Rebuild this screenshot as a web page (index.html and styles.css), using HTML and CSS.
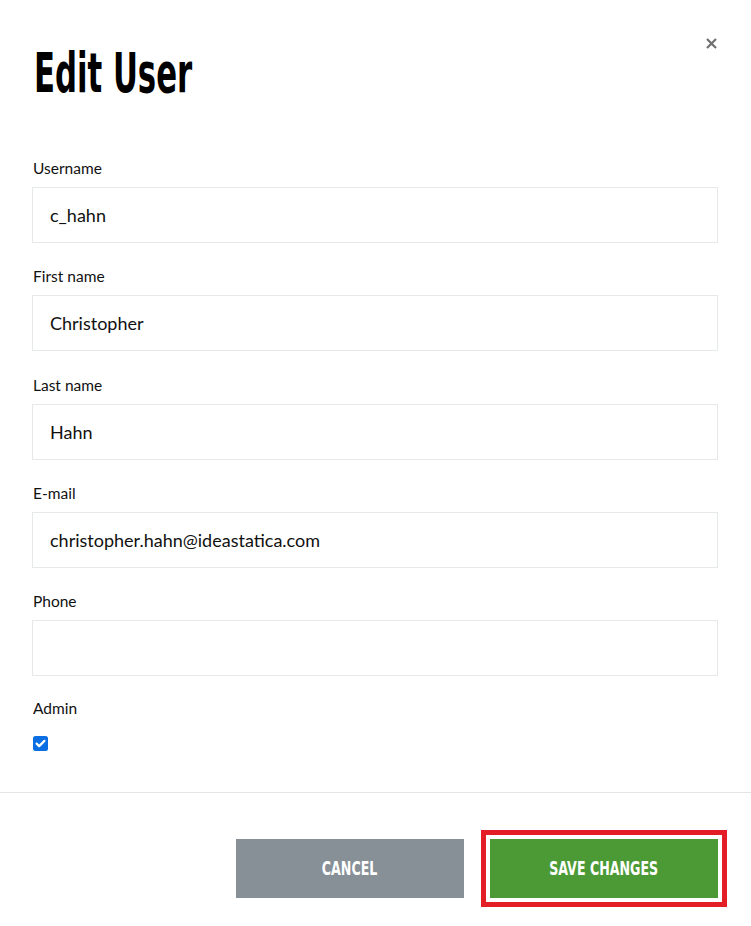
FILE: index.html
```html
<!DOCTYPE html>
<html lang="en">
<head>
<meta charset="utf-8">
<title>Edit User</title>
<link rel="stylesheet" href="styles.css">
</head>
<body>
<div class="modal">
  <div class="modal-body">
    <button class="close" aria-label="Close">
      <svg width="11" height="11" viewBox="0 0 11 11"><path d="M1 1L10 10M10 1L1 10" stroke="#707070" stroke-width="2.2" stroke-linecap="butt"/></svg>
    </button>
    <h1 class="title"><span>Edit User</span></h1>
    <form class="form">
      <div class="field">
        <label class="label">Username</label>
        <div class="input">c_hahn</div>
      </div>
      <div class="field">
        <label class="label">First name</label>
        <div class="input">Christopher</div>
      </div>
      <div class="field field-tall">
        <label class="label">Last name</label>
        <div class="input">Hahn</div>
      </div>
      <div class="field">
        <label class="label">E-mail</label>
        <div class="input">christopher.hahn@ideastatica.com</div>
      </div>
      <div class="field">
        <label class="label">Phone</label>
        <div class="input"></div>
      </div>
      <div class="field field-last">
        <label class="label">Admin</label>
        <span class="checkbox">
          <svg width="15" height="15" viewBox="0 0 15 15"><path d="M3.6 7.6L6.2 10.1L11.4 4.9" fill="none" stroke="#fff" stroke-width="2.2" stroke-linecap="round" stroke-linejoin="round"/></svg>
        </span>
      </div>
    </form>
  </div>
  <div class="modal-footer">
    <button class="btn btn-cancel"><span>CANCEL</span></button>
    <button class="btn btn-save"><span>SAVE CHANGES</span></button>
  </div>
</div>
</body>
</html>
```

FILE: styles.css
```css
html, body {
  margin: 0;
  padding: 0;
  background: #fff;
}
body {
  font-family: Lato, "Open Sans", sans-serif;
  color: #111;
}
.modal {
  width: 751px;
  height: 926px;
  display: flex;
  flex-direction: column;
}
.modal-body {
  position: relative;
  padding: 45px 33px 0 32px;
}
.close {
  position: absolute;
  top: 38px;
  right: 34px;
  width: 11px;
  height: 11px;
  padding: 0;
  border: 0;
  background: none;
  display: flex;
}
.title {
  margin: 0;
  font-family: "DejaVu Sans Condensed", "Liberation Sans Narrow", sans-serif;
  font-weight: 700;
  font-size: 56px;
  line-height: 56px;
  height: 56px;
  color: #000;
  padding-left: 2px;
}
.title span {
  display: inline-block;
  transform: scaleX(0.61);
  transform-origin: left center;
  letter-spacing: 0;
}
.form {
  margin-top: 58px;
  display: flex;
  flex-direction: column;
  gap: 24px;
}
.field {
  display: flex;
  flex-direction: column;
}
.field-tall {
  margin-top: 1px;
}
.field-last {
  margin-top: -1px;
}
.label {
  font-size: 15.5px;
  line-height: 18px;
  height: 18px;
  color: #111;
  padding-left: 1px;
  margin-bottom: 10px;
}
.input {
  box-sizing: border-box;
  height: 56px;
  border: 1px solid #e6e9ea;
  padding: 0 17px;
  font-size: 18px;
  line-height: 54px;
  color: #111;
}
.checkbox {
  margin-top: 9px;
  margin-left: 1px;
  width: 15px;
  height: 15px;
  border-radius: 2.5px;
  background: #0b6ee3;
  display: flex;
}
.modal-footer {
  margin-top: 41px;
  border-top: 1px solid #e4e4e4;
  padding: 46px 33px 0 0;
  display: flex;
  justify-content: flex-end;
  gap: 26px;
}
.btn {
  width: 228px;
  height: 59px;
  border: 0;
  padding: 0;
  color: #fff;
  font-family: "DejaVu Sans Condensed", "Liberation Sans Narrow", sans-serif;
  font-weight: 700;
  font-size: 19.5px;
  display: flex;
  align-items: center;
  justify-content: center;
}
.btn span {
  display: inline-block;
  transform: scaleX(0.72);
}
.btn-cancel {
  background: #878f97;
}
.btn-save {
  background: #4c9a36;
  outline: 5px solid #e41e26;
  outline-offset: 4px;
}
```
